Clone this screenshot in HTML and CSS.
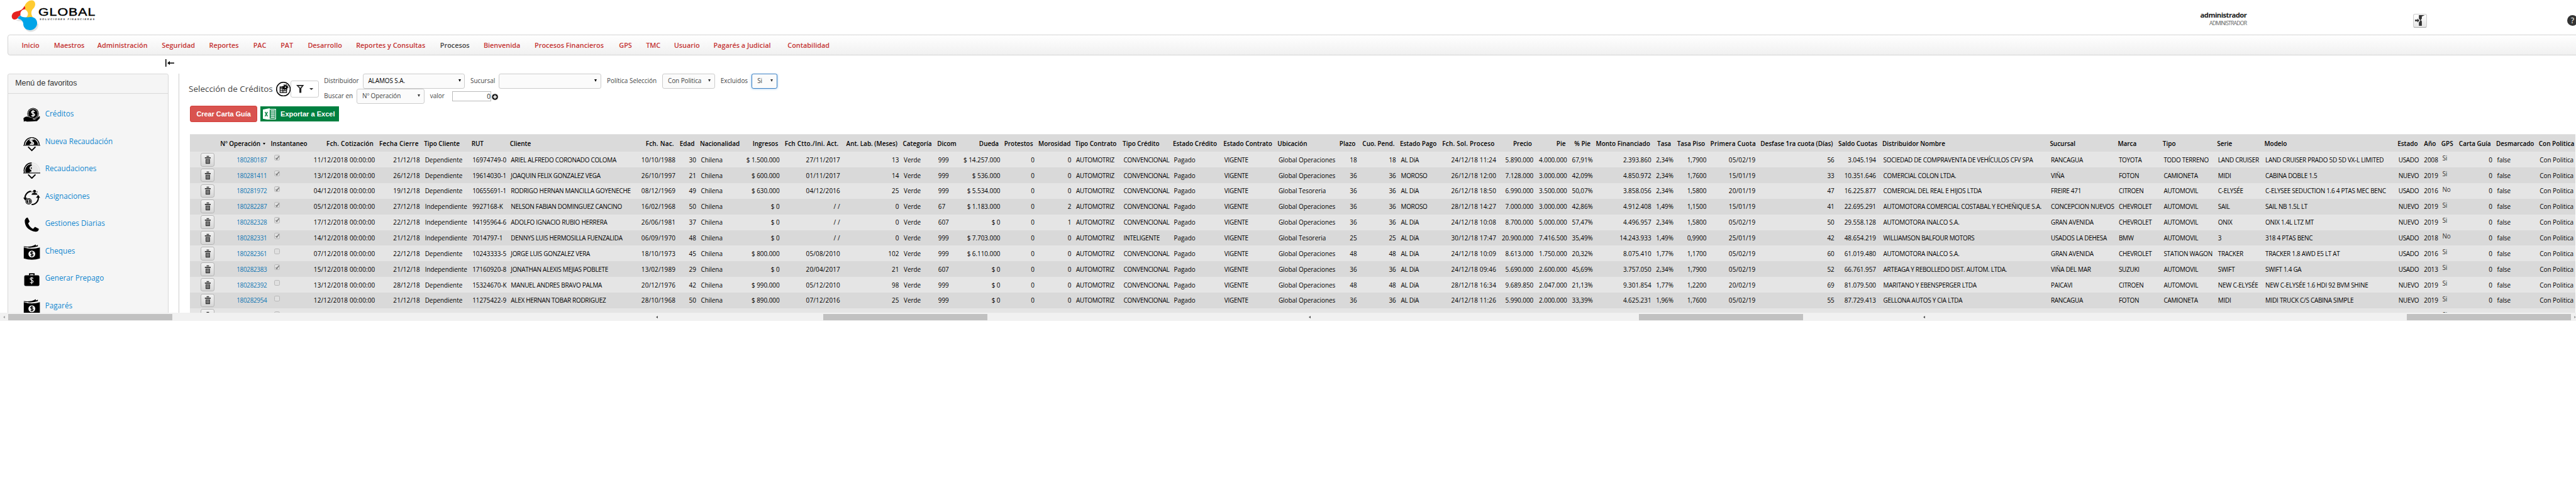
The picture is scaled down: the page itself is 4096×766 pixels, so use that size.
FILE: index.html
```html
<!DOCTYPE html>
<html lang="es">
<head>
<meta charset="utf-8">
<title>Selección de Créditos</title>
<link rel="stylesheet" href="styles.css">
</head>
<body>
<svg class="defs" width="0" height="0">
  <symbol id="i-trash" viewBox="0 0 14 18"><path d="M1 4h12v2H1zM4.500 3V1h5v2M2.500 7.500h9V17h-9z" fill="#333"/><path d="M4.800 8.500v7M7 8.500v7M9.200 8.500v7" stroke="#ddd" stroke-width=".9"/></symbol>
  <symbol id="i-wad" viewBox="0 0 34 32"><path d="M1 6q16 5 32 0v22q-16 5-32 0z"/><path d="M1 4q14 2 24-4v3q-12 4-24 2zM10 5.500q12-1 19-4.500v3q-8 3-19 2.500z"/><circle cx="17" cy="19" r="6.800" fill="#f5f5f5"/><path d="M19.500 16.500q-2.500-2-4.700-.3-1.200 1.800 2.200 2.600 3.600 1 2.300 2.900-2 1.800-4.900 0M17 13.500v11" stroke="#000" stroke-width="1.500" fill="none"/></symbol>
</svg>
<div class="page">
  <header class="top">
    <div class="logo">
      <svg class="logo-mark" viewBox="0 0 240 201">
        <g transform="translate(4 6)" fill="#e3e3e3"><path d="M92 120C112 118 108 106 125 106C140 120 142 130 143 145C144 170 160 190 184 190C210 190 234 172 232 140Z"/></g>
        <path fill="#ffcb31" d="M149 42C160 12 180 1 197 2C220 5 222 36 205 52C188 68 190 88 202 106C188 108 176 108 160 108C180 92 174 62 146 57Z"/>
        <path fill="#e52320" d="M149 38C140 62 118 68 100 70C66 76 64 118 90 120C110 120 108 102 126 94C122 72 134 60 150 58C160 54 154 42 149 38Z"/>
        <path fill="#00a4e8" d="M106 112C116 104 120 98 125 95C134 110 158 107 186 104C216 102 230 126 228 145C226 170 206 185 184 185C156 185 142 165 143 145C140 122 122 118 106 112Z"/>
      </svg>
      <div class="logo-text"><b>GLOBAL</b><i>SOLUCIONES FINANCIERAS</i></div>
    </div>
    <div class="user"><b>administrador</b><span>ADMINISTRADOR</span></div>
    <button class="exit"><svg width="20" height="22" viewBox="0 0 20 22"><path d="M8 0h12l-6 3v4l-2 3 2 3v9H8v-7l3-4-3-4z" fill="#333"/><path d="M0 9.500h5V7l4 4-4 4v-2.500H0z" fill="#333"/></svg></button>
    <div class="help">?</div>
  </header>
  <nav class="nav">
    <a class="n1">Inicio</a><a class="n2">Maestros</a><a class="n3">Administración</a><a class="n4">Seguridad</a><a class="n5">Reportes</a><a class="n6">PAC</a><a class="n7">PAT</a><a class="n8">Desarrollo</a><a class="n9">Reportes y Consultas</a><a class="n10 on">Procesos</a><a class="n11">Bienvenida</a><a class="n12">Procesos Financieros</a><a class="n13">GPS</a><a class="n14">TMC</a><a class="n15">Usuario</a><a class="n16">Pagarés a Judicial</a><a class="n17">Contabilidad</a>
  </nav>
  <div class="collapse"><svg width="18" height="16" viewBox="0 0 18 16"><path d="M1 0v16" stroke="#000" stroke-width="2"/><path d="M8 8h10" stroke="#000" stroke-width="2"/><path d="M4 8l5-4v8z"/></svg></div>
  <div class="body">
    <aside class="side">
      <div class="side-head">Menú de favoritos</div>
      <ul>
        <li><svg viewBox="0 0 35 34"><circle cx="20" cy="12.500" r="11.800"/><circle cx="20" cy="12.500" r="10" fill="none" stroke="#f5f5f5"/><path d="M23.500 8.500q-3-2.500-6-.5-1.700 2.600 2.500 4 4.500 1.500 2.800 4-3 2.400-6.300 0M20 5v14" stroke="#f5f5f5" stroke-width="2" fill="none"/><path d="M0 22q5-6 11-3l8 2q3 1 1 3h4l9-7q2 1 1 5l-6 6-20 1-4-1-3 1z" stroke="#f5f5f5" stroke-width=".6"/></svg><a>Créditos</a></li>
        <li><svg viewBox="0 0 35 34"><path d="M2.500 21a15 15 0 1 1 30 0" fill="none" stroke="#000" stroke-width="2"/><path d="M5 21a12.500 12.500 0 1 1 25 0z"/><path d="M21.500 10q-3.500-3-7 0-2 3 3 4.500t3.200 4.500q-3.500 2.500-7 0M17.500 6.500v14" stroke="#f5f5f5" stroke-width="2.200" fill="none"/><path d="M0 21.800h35" stroke="#000" stroke-width="1.500"/><path d="M10 25l7.500 7.500L25 25" fill="none" stroke="#000" stroke-width="2.400"/></svg><a>Nueva Recaudación</a></li>
        <li><svg viewBox="0 0 35 34"><path d="M2.500 21A15 15 0 0 1 17.500 1.500" fill="none" stroke="#000" stroke-width="2"/><path d="M17.500 1.500A15 15 0 0 1 32.500 21" fill="none" stroke="#e5e5e5" stroke-width="2"/><path d="M5 21A12.500 12.500 0 0 1 17.500 4v17z"/><path d="M30 21A12.500 12.500 0 0 0 17.500 4v17z" fill="#e8e8e8"/><path d="M18 8.500q-4 0-4 3t3.500 3.500v5h-4" stroke="#f5f5f5" stroke-width="2" fill="none"/><path d="M0 21.800h35" stroke="#000" stroke-width="1.500"/><path d="M10 25l7.500 7.500L25 25" fill="none" stroke="#000" stroke-width="2.400"/></svg><a>Recaudaciones</a></li>
        <li><svg viewBox="0 0 35 34"><path d="M3.500 18A13.500 13.500 0 0 1 16 4" fill="none" stroke="#000" stroke-width="2.600"/><path d="M30.500 15A13.500 13.500 0 0 1 17 31" fill="none" stroke="#000" stroke-width="2.600"/><path d="M0 17h8l-4 6zM26 17l4.500-6 4 6z"/><circle cx="11" cy="24.500" r="6.500"/><circle cx="11" cy="24.500" r="4.800" fill="none" stroke="#f5f5f5" stroke-width=".9"/><path d="M12.800 22.700q-1.800-1.300-3.300-.2-.8 1.400 1.500 2t1.500 2q-1.500 1-3.300 0M11 21.300v6.500" stroke="#f5f5f5" fill="none"/><circle cx="23" cy="4" r="3"/><path d="M17 11q0-4 6-4t6 4z"/><circle cx="18" cy="5" r="1.500" fill="#888"/><circle cx="28" cy="5" r="1.500" fill="#888"/></svg><a>Asignaciones</a></li>
        <li><svg viewBox="0 0 35 34"><path d="M3 7Q5 1 9 1l4 8-3 4q3 8 10 11l4-4 8 4q-1 6-7 6Q3 26 3 7z"/></svg><a>Gestiones Diarias</a></li>
        <li><svg><use href="#i-wad"/></svg><a>Cheques</a></li>
        <li><svg viewBox="0 0 35 34"><rect x="2" y="7" width="31" height="22" rx="3"/><path d="M13 7V4h9v3" fill="none" stroke="#000" stroke-width="2.500"/><path d="M20.500 13.500q-3-2.500-6-.3-1.500 2.500 2.800 4 4.300 1.600 2.500 4.200-3 2-6 0M17.300 11v14" stroke="#f5f5f5" stroke-width="1.500" fill="none"/></svg><a>Generar Prepago</a></li>
        <li><svg><use href="#i-wad"/></svg><a>Pagarés</a></li>
      </ul>
    </aside>
    <main class="main">
      <div class="bar">
        <h1>Selección de Créditos</h1>
        <svg class="gear" width="30" height="30" viewBox="0 0 30 30"><circle cx="15" cy="15" r="14" fill="#fff" stroke="#000" stroke-width="2"/><path d="M8 10.500h13.500v11.500H8zM8 14.300h13.500M8 18.200h13.500M14 10.500V22M8 11.500h8" fill="none" stroke="#000" stroke-width="1.400"/><circle cx="19" cy="11" r="4.200"/><circle cx="19" cy="11" r="5.200" fill="none" stroke="#000" stroke-width="2" stroke-dasharray="2 2.080"/><circle cx="19" cy="11" r="1.400" fill="#fff"/></svg>
        <button class="filter"><svg width="17" height="17" viewBox="0 0 17 17"><path d="M0 0h16L10.500 7v9h-4V7z" fill="#222"/><path d="M4.500 2.200h7L8.500 6z" fill="#fff"/></svg><svg width="8" height="4" viewBox="0 0 8 4"><path d="M0 0h8L4 4z" fill="#333"/></svg></button>
        <div class="fields">
          <div class="frow">
            <label class="l1">Distribuidor</label><div class="sel s1 dk">ALAMOS S.A.</div>
            <label class="l2">Sucursal</label><div class="sel s2 dk"></div>
            <label class="l3">Política Selección</label><div class="sel s3">Con Politica</div>
            <label class="l4">Excluidos</label><div class="sel s4 focus">Si</div>
          </div>
          <div class="frow">
            <label class="l5">Buscar en</label><div class="sel s5">Nº Operación</div>
            <label class="l6">valor</label><div class="num">0</div>
            <svg class="plus" width="13" height="13" viewBox="0 0 13 13"><circle cx="6.500" cy="6.500" r="6.300" fill="#222"/><path d="M6.500 3v7M3 6.500h7" stroke="#fff" stroke-width="2.200"/></svg>
          </div>
        </div>
      </div>
      <div class="actions">
        <button class="red">Crear Carta Guía</button>
        <button class="green"><svg width="27" height="24" viewBox="0 0 27 24"><path d="M0 2.500L14 0v24L0 21.500z" fill="#fff"/><path d="M14 2h12v20H14" fill="none" stroke="#fff" stroke-width="1.500"/><path d="M16 5.500h8M16 9.800h8M16 14h8M16 18.300h8" stroke="#fff" stroke-width="2.200"/><path d="M4.500 7.500l5 9M9.500 7.500l-5 9" stroke="#008040" stroke-width="1.800"/></svg><span>Exportar a Excel</span></button>
      </div>
      <table class="grid"><colgroup id="cols"></colgroup><thead id="head"></thead><tbody id="rows"></tbody></table>
    </main>
  </div>
  <div class="scroll"><i class="al lt"></i><b class="t1"></b><i class="al a2"></i><b class="t2"></b><i class="al a3"></i><b class="t3"></b><i class="al a4"></i><b class="t4"></b><i class="ar"></i></div>
</div>
<script src="grid.js"></script>
</body>
</html>
```
FILE: styles.css
```css
* { box-sizing: border-box; }
body { margin: 0; background: #fff; overflow: hidden; }
.defs { position: absolute; }
.page { width: 5272px; height: 986px; zoom: 0.77694; overflow: hidden; font-family: "Open Sans", "Noto Sans", sans-serif; font-size: 12.8px; color: #333; }
button { font: inherit; padding: 0; margin: 0; }
svg { flex: none; }

.top { height: 71px; display: flex; align-items: flex-start; }
.top > * { flex: none; }
.logo { display: flex; width: 220px; }
.logo-mark { width: 80px; height: 67px; }
.logo-text { width: 120px; padding-top: 14px; margin-left: -2px; color: #000; display: flex; flex-direction: column; align-items: flex-start; }
.logo-text b { font: 22px/23px "Liberation Sans", sans-serif; -webkit-text-stroke: .6px #000; letter-spacing: 1px; white-space: nowrap; transform: scaleX(1.25); transform-origin: left; }
.logo-text i { font: italic bold 5px/5px "Liberation Sans", sans-serif; letter-spacing: 2.08px; padding: 0 0 0 3px; white-space: nowrap; color: #333; }
.user { width: 200px; margin-left: 4178px; padding-top: 20px; display: flex; flex-direction: column; align-items: flex-end; }
.user b { font-size: 14.500px; line-height: 20px; letter-spacing: -.7px; color: #222; }
.user span { font-size: 11.300px; line-height: 18px; letter-spacing: -1.100px; color: #666; }
.exit { width: 28px; height: 28px; margin: 28px 0 0 341px; border: 1px solid #ccc; border-bottom-color: #aaa; border-radius: 4px; background: linear-gradient(#fff, #e6e6e6); display: flex; align-items: center; justify-content: center; }
.exit svg { width: 20px; }
.help { width: 22px; height: 22px; margin: 31px 0 0 287px; border-radius: 50%; background: #333; color: #fff; font-size: 16px; line-height: 22px; text-align: center; }

.nav { height: 42px; margin-left: 15px; width: 5300px; border: 1px solid #d4d4d4; border-radius: 5px; background: linear-gradient(#fff, #f0f0f0); display: flex; padding-left: 28px; line-height: 41px; font-size: 14px; font-weight: 600; color: #c43232; white-space: nowrap; }
.nav a { flex: none; }
.nav .on { color: #444; }
.n1 { width: 66px; } .n2 { width: 89px; } .n3 { width: 132px; } .n4 { width: 96.700px; } .n5 { width: 90.300px; } .n6 { width: 56px; } .n7 { width: 55.700px; } .n8 { width: 98.800px; } .n9 { width: 172px; } .n10 { width: 89px; } .n11 { width: 104.500px; } .n12 { width: 172.700px; } .n13 { width: 55.300px; } .n14 { width: 57.300px; } .n15 { width: 80.700px; } .n16 { width: 151.800px; }

.collapse { height: 38px; padding: 8px 0 0 338px; }
.body { height: 489px; overflow: hidden; display: flex; align-items: flex-start; }
.side { flex: none; width: 330px; height: 500px; margin-left: 15px; border: 1px solid #d9d9d9; border-radius: 4px; background: #f5f5f5; }
.side-head { height: 39px; border-bottom: 1px solid #d9d9d9; padding: 0 15px; font: 15.900px/38px "Liberation Sans", sans-serif; }
.side ul { list-style: none; margin: 0; padding: 15px 0 0 31px; }
.side li { height: 56px; display: flex; align-items: center; gap: 10px; font-size: 15.100px; color: #1288d0; padding-bottom: 4px; }
.side li svg { width: 35px; height: 34px; margin-top: 9px; }
.main { flex: none; width: 4907px; height: 500px; margin-left: 20px; padding-left: 21px; border-left: 1px solid #ccc; }

.bar { height: 62px; display: flex; align-items: flex-start; }
h1 { margin: 20px 0 0 -1px; width: 179px; font-size: 17.300px; line-height: 22px; font-weight: 500; color: #444; white-space: nowrap; }
.gear { margin: 16px 0 0 0; }
.filter { width: 57px; height: 34px; margin-top: 14px; border: 1px solid #ccc; border-radius: 4px; background: #fff; display: flex; align-items: center; justify-content: center; gap: 11px; }
.fields { margin-left: 11px; color: #444; }
.frow { display: flex; height: 31px; align-items: flex-start; line-height: 30px; white-space: nowrap; }
.frow label { flex: none; }
.sel { flex: none; height: 30px; border: 1px solid #ccc; border-radius: 4px; background: #fbfbfb; line-height: 28px; padding: 0 7px 0 10px; display: flex; justify-content: space-between; align-items: center; letter-spacing: -.1px; }
.sel::after { content: ""; margin: -3px 0 0 auto; border: 3.500px solid transparent; border-top: 6px solid #333; border-bottom: 0; }
.sel.dk { color: #000; }
.sel.dk::after { border-top-color: #000; }
.sel.focus { border-color: #3a7fc4; box-shadow: 0 0 5px #8fc0ea; }
.l1 { width: 79px; } .s1 { width: 209px; }
.l2 { width: 70px; padding-left: 11.500px; } .s2 { width: 209px; }
.l3 { width: 125.500px; padding-left: 12px; } .s3 { width: 107.500px; }
.l4 { width: 75.500px; padding-left: 11.500px; } .s4 { width: 52px; }
.l5 { width: 67px; } .s5 { width: 138px; }
.l6 { width: 57px; padding-left: 12px; }
.num { width: 80px; height: 20px; margin-top: 5px; border: 1px solid #bbb; line-height: 18px; text-align: right; color: #222; }
.plus { margin: 10px 0 0 2px; }

.actions { display: flex; height: 61px; padding: 3px 0 0 2px; }
.red { width: 137px; height: 34px; border: 1px solid #d43f3a; border-radius: 4px; background: #d9534f; color: #fff; font: bold 14px "Liberation Sans", sans-serif; }
.green { width: 161px; height: 30px; margin: 2px 0 0 7px; border: 0; background: #008040; color: #fff; font: bold 14.200px "Liberation Sans", sans-serif; display: flex; align-items: center; gap: 9px; padding-left: 5px; white-space: nowrap; }

.grid { table-layout: fixed; border-collapse: collapse; width: 4882px; margin-left: 1px; color: #000; }
.grid th, .grid td { padding: 0 5px; text-align: left; white-space: nowrap; overflow: visible; }
.grid th { height: 36px; background: #dadada; font-weight: 600; padding: 0 8px 0 3px; border-top: 1px solid #e5e5e5; }
.grid td { height: 32px; letter-spacing: -.05px; }
.grid .r { text-align: right; }
.grid .saldo { padding-right: 10px; }
.grid th.d { letter-spacing: .3px; }
.grid td.d { letter-spacing: .2px; }
.grid td.c { letter-spacing: -.35px; }
.grid tbody tr { background: #d9d9d9; }
.grid tbody tr:nth-child(odd) { background: #e5e5e5; }
.grid td.op { color: #1478b4; letter-spacing: -.43px; }
.grid .gps { color: #333; padding-bottom: 7px; }
.arrow { display: inline-block; border: 3.500px solid transparent; border-top: 4.500px solid #000; border-bottom: 0; margin: 0 0 2px 5px; }
.trash { width: 29px; height: 28px; margin-left: 17px; border: 1px solid #b5b5b5; border-radius: 4px; background: linear-gradient(#f2f2f2, #d6d6d6); display: flex; align-items: center; justify-content: center; }
.trash svg { width: 14px; height: 18px; }
.check { width: 12px; height: 12px; margin: -8px 0 0 5px; border: 1px solid #b8b8b8; border-radius: 3px; background: #e0e0e0; display: flex; }
.check svg { width: 10px; height: 10px; }

.scroll { height: 17px; background: #f1f1f1; display: flex; align-items: center; padding-left: 6px; }
.scroll b { height: 13px; background: #c1c1c1; flex: none; }
.al, .ar { flex: none; width: 4px; border: 3.500px solid transparent; border-left: 0; border-right: 4px solid #505050; }
.al.lt { border-right-color: #a3a3a3; }
.ar { border-right: 0; border-left: 4px solid #a3a3a3; margin-left: 6px; }
.t1 { width: 336px; margin-left: 7px; }
.a2 { margin-left: 989px; } .t2 { width: 336px; margin-left: 339px; }
.a3 { margin-left: 657px; } .t3 { width: 336px; margin-left: 672px; }
.a4 { margin-left: 246px; } .t4 { width: 336px; margin-left: 986px; }
```
FILE: grid.js
```js
// [title, right edge of the column, classes: r = right aligned, d = date, c = capitals]
const columns = [
  ['', 440, ''], ['Nº Operación', 551, 'r op'], ['Instantaneo', 632, ''], ['Fch. Cotización', 772.5, 'r d'],
  ['Fecha Cierre', 864.5, 'r d'], ['Tipo Cliente', 961.7, ''], ['RUT', 1040.3, ''], ['Cliente', 1297, 'c'],
  ['Fch. Nac.', 1387.3, 'r d'], ['Edad', 1429.4, 'r'], ['Nacionalidad', 1517, ''], ['Ingresos', 1600.3, 'r'],
  ['Fch Ctto./Ini. Act.', 1724.3, 'r d'], ['Ant. Lab. (Meses)', 1844.5, 'r'], ['Categoría', 1915, ''], ['Dicom', 1960, ''],
  ['Dueda', 2052, 'r'], ['Protestos', 2122, 'r'], ['Morosidad', 2197.3, 'r'], ['Tipo Contrato', 2294.5, 'c'],
  ['Tipo Crédito', 2397.3, 'c'], ['Estado Crédito', 2500.7, ''], ['Estado Contrato', 2611.5, 'c'], ['Ubicación', 2737, ''],
  ['Plazo', 2782, 'r'], ['Cuo. Pend.', 2862, 'r'], ['Estado Pago', 2944, 'c'], ['Fch. Sol. Proceso', 3067, 'r d'],
  ['Precio', 3143.3, 'r'], ['Pie', 3212.2, 'r'], ['% Pie', 3263.2, 'r'], ['Monto Financiado', 3384.4, 'r'],
  ['Tasa', 3428, 'r'], ['Tasa Piso', 3497.5, 'r'], ['Primera Cuota', 3598, 'r d'], ['Desfase 1ra cuota (Días)', 3759.3, 'r'],
  ['Saldo Cuotas', 3849.5, 'r saldo'], ['Distribuidor Nombre', 4192.3, 'c'], ['Sucursal', 4331.3, 'c'], ['Marca', 4423.3, 'c'],
  ['Tipo', 4534.5, 'c'], ['Serie', 4631.3, 'c'], ['Modelo', 4903.8, 'c'], ['Estado', 4956, 'c'],
  ['Año', 4993.5, 'r'], ['GPS', 5027, 'gps'], ['Carta Guía', 5105.8, 'r'], ['Desmarcado', 5193, ''], ['Con Politica', 5270, '']
];

const data = `
180280187|1|11/12/2018 00:00:00|21/12/18|Dependiente|16974749-0|ARIEL ALFREDO CORONADO COLOMA|10/10/1988|30|$ 1.500.000|27/11/2017|13|999|$ 14.257.000|0|CONVENCIONAL|Operaciones|18|AL DíA|24/12/18 11:24|5.890.000|4.000.000|67,91%|2.393.860|2,34%|1,7900|05/02/19|56|3.045.194|SOCIEDAD DE COMPRAVENTA DE VEHÍCULOS CFV SPA|RANCAGUA|TOYOTA|TODO TERRENO|LAND CRUISER|LAND CRUISER PRADO 5D 5D VX-L LIMITED|USADO|2008|Si
180281411|1|13/12/2018 00:00:00|26/12/18|Dependiente|19614030-1|JOAQUIN FELIX GONZALEZ VEGA|26/10/1997|21|$ 600.000|01/11/2017|14|999|$ 536.000|0|CONVENCIONAL|Operaciones|36|MOROSO|26/12/18 12:00|7.128.000|3.000.000|42,09%|4.850.972|2,34%|1,7600|15/01/19|33|10.351.646|COMERCIAL COLON LTDA.|VIÑA|FOTON|CAMIONETA|MIDI|CABINA DOBLE 1.5|NUEVO|2019|Si
180281972|1|04/12/2018 00:00:00|19/12/18|Dependiente|10655691-1|RODRIGO HERNAN MANCILLA GOYENECHE|08/12/1969|49|$ 630.000|04/12/2016|25|999|$ 5.534.000|0|CONVENCIONAL|Tesoreria|36|AL DíA|26/12/18 18:50|6.990.000|3.500.000|50,07%|3.858.056|2,34%|1,5800|20/01/19|47|16.225.877|COMERCIAL DEL REAL E HIJOS LTDA|FREIRE 471|CITROEN|AUTOMOVIL|C-ELYSÉE|C-ELYSEE SEDUCTION 1.6 4 PTAS MEC BENC|USADO|2016|No
180282287|1|05/12/2018 00:00:00|27/12/18|Independiente|9927168-K|NELSON FABIAN DOMINGUEZ CANCINO|16/02/1968|50|$ 0|/ /|0|67|$ 1.183.000|2|CONVENCIONAL|Operaciones|36|MOROSO|28/12/18 14:27|7.000.000|3.000.000|42,86%|4.912.408|1,49%|1,1500|15/01/19|41|22.695.291|AUTOMOTORA COMERCIAL COSTABAL Y ECHEÑIQUE S.A.|CONCEPCION NUEVOS|CHEVROLET|AUTOMOVIL|SAIL|SAIL NB 1.5L LT|NUEVO|2019|Si
180282328|1|17/12/2018 00:00:00|22/12/18|Independiente|14195964-6|ADOLFO IGNACIO RUBIO HERRERA|26/06/1981|37|$ 0|/ /|0|607|$ 0|1|CONVENCIONAL|Operaciones|36|AL DíA|24/12/18 10:08|8.700.000|5.000.000|57,47%|4.496.957|2,34%|1,5800|05/02/19|50|29.558.128|AUTOMOTORA INALCO S.A.|GRAN AVENIDA|CHEVROLET|AUTOMOVIL|ONIX|ONIX 1.4L LTZ MT|NUEVO|2019|Si
180282331|1|14/12/2018 00:00:00|21/12/18|Independiente|7014797-1|DENNYS LUIS HERMOSILLA FUENZALIDA|06/09/1970|48|$ 0|/ /|0|999|$ 7.703.000|0|INTELIGENTE|Tesoreria|25|AL DíA|30/12/18 17:47|20.900.000|7.416.500|35,49%|14.243.933|1,49%|0,9900|25/01/19|42|48.654.219|WILLIAMSON BALFOUR MOTORS|USADOS LA DEHESA|BMW|AUTOMOVIL|3|318 4 PTAS BENC|USADO|2018|No
180282361|0|07/12/2018 00:00:00|22/12/18|Dependiente|10243333-5|JORGE LUIS GONZALEZ VERA|18/10/1973|45|$ 800.000|05/08/2010|102|999|$ 6.110.000|0|CONVENCIONAL|Operaciones|48|AL DíA|24/12/18 10:09|8.613.000|1.750.000|20,32%|8.075.410|1,77%|1,1700|05/02/19|60|61.019.480|AUTOMOTORA INALCO S.A.|GRAN AVENIDA|CHEVROLET|STATION WAGON|TRACKER|TRACKER 1.8 AWD E5 LT AT|USADO|2016|Si
180282383|1|15/12/2018 00:00:00|21/12/18|Independiente|17160920-8|JONATHAN ALEXIS MEJIAS POBLETE|13/02/1989|29|$ 0|20/04/2017|21|607|$ 0|0|CONVENCIONAL|Operaciones|36|AL DíA|24/12/18 09:46|5.690.000|2.600.000|45,69%|3.757.050|2,34%|1,7900|05/02/19|52|66.761.957|ARTEAGA Y REBOLLEDO DIST. AUTOM. LTDA.|VIÑA DEL MAR|SUZUKI|AUTOMOVIL|SWIFT|SWIFT 1.4 GA|USADO|2013|Si
180282392|0|13/12/2018 00:00:00|28/12/18|Dependiente|15324670-K|MANUEL ANDRES BRAVO PALMA|20/12/1976|42|$ 990.000|05/12/2010|98|999|$ 0|0|CONVENCIONAL|Operaciones|48|AL DíA|28/12/18 16:34|9.689.850|2.047.000|21,13%|9.301.854|1,77%|1,2200|20/02/19|69|81.079.500|MARITANO Y EBENSPERGER LTDA|PAICAVI|CITROEN|AUTOMOVIL|NEW C-ELYSÉE|NEW C-ELYSÉE 1.6 HDI 92 BVM SHINE|NUEVO|2019|Si
180282954|0|12/12/2018 00:00:00|21/12/18|Dependiente|11275422-9|ALEX HERNAN TOBAR RODRIGUEZ|28/10/1968|50|$ 890.000|07/12/2016|25|999|$ 0|0|CONVENCIONAL|Operaciones|36|AL DíA|24/12/18 11:26|5.990.000|2.000.000|33,39%|4.625.231|1,96%|1,7600|05/02/19|55|87.729.413|GELLONA AUTOS Y CIA LTDA|RANCAGUA|FOTON|CAMIONETA|MIDI|MIDI TRUCK C/S CABINA SIMPLE|NUEVO|2019|Si`;

const trash = '<div class="trash"><svg><use href="#i-trash"/></svg></div>';
const check = on => '<div class="check">' + (on ? '<svg viewBox="0 0 10 10"><path d="M2 5.5l2 2.300L8.500 1.500" fill="none" stroke="#777" stroke-width="2"/></svg>' : '') + '</div>';

let left = 388;
document.getElementById('cols').innerHTML = columns.map(c => {
  const w = c[1] - left;
  left = c[1];
  return `<col style="width:${w.toFixed(1)}px">`;
}).join('');

document.getElementById('head').innerHTML = '<tr>' + columns.map((c, i) =>
  `<th class="${c[2].replace(/op|gps|c$/, '')}">${c[0]}${i === 1 ? '<i class="arrow"></i>' : ''}</th>`).join('') + '</tr>';

const rows = data.trim().split('\n').map(line => {
  const d = line.split('|');
  return [trash, d[0], check(d[1] === '1'), ...d.slice(2, 9), 'Chilena', ...d.slice(9, 12), 'Verde', d[12], d[13], '0', d[14],
    'AUTOMOTRIZ', d[15], 'Pagado', 'VIGENTE', 'Global ' + d[16], d[17], d[17], ...d.slice(18, 38), '0', 'false', 'Con Politica'];
});
rows.push(columns.map((c, i) => i === 0 ? trash : i === 2 ? check(true) : i === 45 ? 'Si' : ''));

document.getElementById('rows').innerHTML = rows.map(r =>
  '<tr>' + r.map((v, i) => `<td class="${columns[i][2]}">${v}</td>`).join('') + '</tr>').join('');
```
